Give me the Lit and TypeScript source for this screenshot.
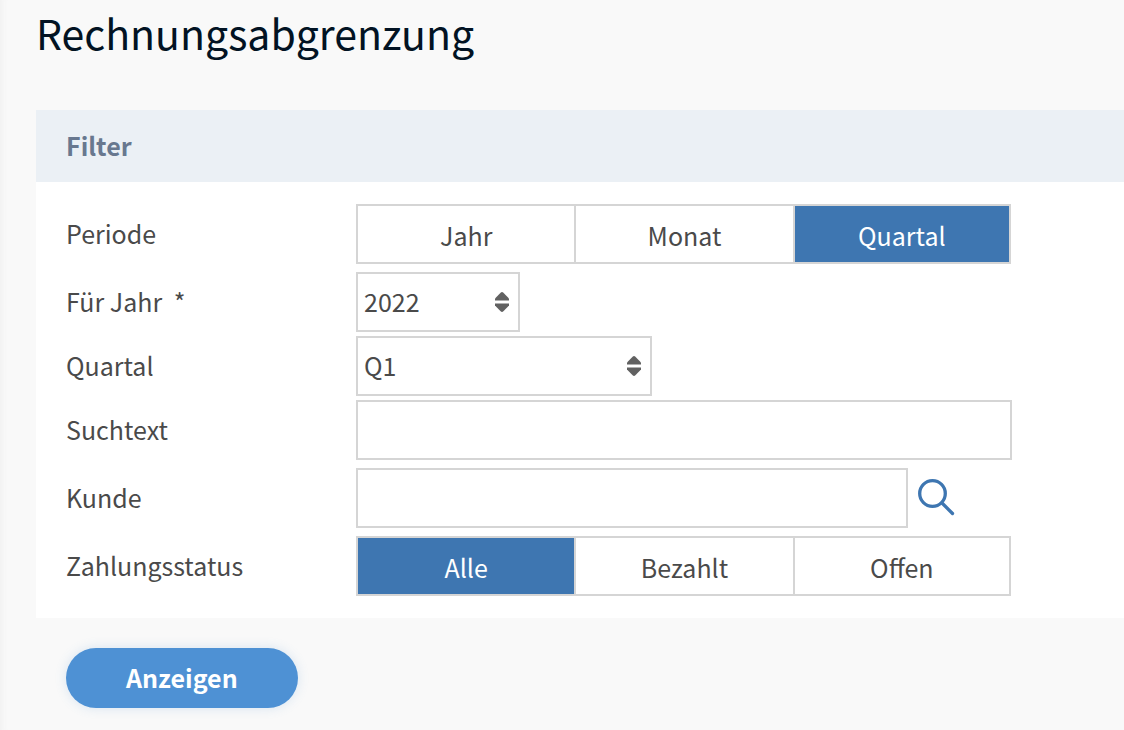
import { LitElement, html, css, svg } from "lit";
import { customElement, property, state } from "lit/decorators.js";

@customElement("segmented-choice")
class SegmentedChoice extends LitElement {
  @property() name = "";
  @property() label = "";
  @property() value = "";
  @property({ attribute: false }) options: string[] = [];

  static styles = css`
    :host {
      display: block;
    }
    .group {
      display: grid;
      grid-auto-flow: column;
      grid-auto-columns: minmax(0, 1fr);
      height: 60px;
      margin-right: 1px;
    }
    .option {
      display: grid;
      box-sizing: border-box;
      border: 2px solid #d5d5d5;
      border-right-width: 0;
      cursor: pointer;
    }
    .option:last-child {
      border-right-width: 2px;
    }
    .option > * {
      grid-area: 1 / 1;
    }
    .radio {
      appearance: none;
      margin: 0;
      background: #fff;
    }
    .radio:checked {
      background: #3e76b1;
    }
    .radio:focus-visible {
      outline: 2px solid #4e91d4;
    }
    .text {
      z-index: 1;
      padding-top: 2px;
      line-height: 54px;
      text-align: center;
    }
    .radio:checked + .text {
      color: #fff;
    }
  `;

  private pick(option: string) {
    this.value = option;
    this.dispatchEvent(new CustomEvent("pick", { detail: option }));
  }

  render() {
    return html`
      <div class="group" role="radiogroup" aria-label=${this.label}>
        ${this.options.map(
          (option) => html`
            <label class="option">
              <input
                class="radio"
                type="radio"
                name=${this.name}
                .checked=${option === this.value}
                @change=${() => this.pick(option)}
              />
              <span class="text">${option}</span>
            </label>
          `
        )}
      </div>
    `;
  }
}

const sortArrows = svg`
  <path d="M0 8.5V6.6L5.6 0.8Q7 -0.6 8.4 0.8L14 6.6V8.5Z" />
  <path d="M0 11.5V13.4L5.6 19.2Q7 20.6 8.4 19.2L14 13.4V11.5Z" />
`;

@customElement("app-root")
class AppRoot extends LitElement {
  @state() private period = "Quartal";
  @state() private payment = "Alle";

  static styles = css`
    :host {
      display: block;
      box-sizing: border-box;
      min-height: 100vh;
      padding: 0 0 22px 36px;
      background: #f9f9f9;
      box-shadow: inset 8px 0 8px -8px #ececec;
      color: #4a4a4a;
      font-family: "Noto Sans CJK SC", "Noto Sans", sans-serif;
      font-size: 25px;
      line-height: 36px;
    }
    .title {
      margin: 0;
      padding: 0 0 46px;
      color: #021323;
      font-size: 41px;
      font-weight: 400;
      line-height: 64px;
    }
    .heading {
      margin: 0;
      padding: 17px 30px 19px;
      background: #ebf0f5;
      color: #68788f;
      font-size: 25px;
      font-weight: 700;
      line-height: 36px;
    }
    .fields {
      display: flex;
      flex-direction: column;
      gap: 4px;
      padding: 22px 30px;
      background: #fff;
    }
    .row {
      display: grid;
      grid-template-columns: 290px minmax(0, 656px);
      align-items: center;
    }
    .name {
      padding-bottom: 2px;
    }
    .after {
      margin-bottom: 4px;
    }
    .before {
      margin-top: 4px;
    }
    .star {
      margin-left: 6px;
    }
    .box {
      box-sizing: border-box;
      width: 100%;
      height: 60px;
      margin: 0;
      padding: 0 6px 2px;
      border: 2px solid #d5d5d5;
      border-radius: 0;
      background: #fff;
      color: inherit;
      font: inherit;
      appearance: none;
    }
    .picker {
      display: grid;
      align-items: center;
      width: 164px;
    }
    .wide {
      width: 296px;
    }
    .picker > * {
      grid-area: 1 / 1;
    }
    .arrows {
      justify-self: end;
      width: 14px;
      height: 20px;
      margin-right: 11px;
      fill: #616161;
      pointer-events: none;
    }
    .lookup {
      display: grid;
      grid-template-columns: minmax(0, 1fr) 94px;
      gap: 10px;
      align-items: center;
    }
    .search {
      justify-self: start;
      display: flex;
      padding: 0 0 2px;
      border: 0;
      background: none;
      cursor: pointer;
    }
    .glass {
      width: 37px;
      height: 37px;
      fill: none;
      stroke: #3e76b1;
      stroke-width: 3.3;
      stroke-linecap: round;
    }
    .submit {
      display: block;
      height: 60px;
      margin: 30px 30px 0;
      padding: 0 60px 2px;
      border: 0;
      border-radius: 30px;
      background: #4e91d4;
      box-shadow: 0 0 12px rgba(78, 145, 212, 0.2);
      color: #fff;
      font: inherit;
      font-weight: 700;
      cursor: pointer;
    }
  `;

  render() {
    return html`
      <h1 class="title">Rechnungsabgrenzung</h1>
      <form @submit=${(e: Event) => e.preventDefault()}>
        <section>
          <h2 class="heading">Filter</h2>
          <div class="fields">
            <div class="row after">
              <span class="name">Periode</span>
              <segmented-choice
                name="period"
                label="Periode"
                .options=${["Jahr", "Monat", "Quartal"]}
                .value=${this.period}
                @pick=${(e: CustomEvent) => (this.period = e.detail)}
              ></segmented-choice>
            </div>
            <div class="row">
              <label class="name" for="year">Für Jahr <span class="star">*</span></label>
              <div class="picker">
                <select class="box" id="year" required>
                  <option>2022</option>
                </select>
                <svg class="arrows" viewBox="0 0 14 20" aria-hidden="true">${sortArrows}</svg>
              </div>
            </div>
            <div class="row">
              <label class="name" for="quarter">Quartal</label>
              <div class="picker wide">
                <select class="box" id="quarter">
                  <option>Q1</option>
                  <option>Q2</option>
                  <option>Q3</option>
                  <option>Q4</option>
                </select>
                <svg class="arrows" viewBox="0 0 14 20" aria-hidden="true">${sortArrows}</svg>
              </div>
            </div>
            <div class="row">
              <label class="name" for="text">Suchtext</label>
              <input class="box" id="text" type="text" />
            </div>
            <div class="row before after">
              <label class="name" for="customer">Kunde</label>
              <div class="lookup">
                <input class="box" id="customer" type="text" />
                <button class="search" type="button" aria-label="Kunde suchen">
                  <svg class="glass" viewBox="0 0 37 37" aria-hidden="true">
                    <circle cx="14.5" cy="14.5" r="12.8" />
                    <path d="M24 24L34.5 34.5" />
                  </svg>
                </button>
              </div>
            </div>
            <div class="row">
              <span class="name">Zahlungsstatus</span>
              <segmented-choice
                name="payment"
                label="Zahlungsstatus"
                .options=${["Alle", "Bezahlt", "Offen"]}
                .value=${this.payment}
                @pick=${(e: CustomEvent) => (this.payment = e.detail)}
              ></segmented-choice>
            </div>
          </div>
        </section>
        <button class="submit" type="submit">Anzeigen</button>
      </form>
    `;
  }
}
